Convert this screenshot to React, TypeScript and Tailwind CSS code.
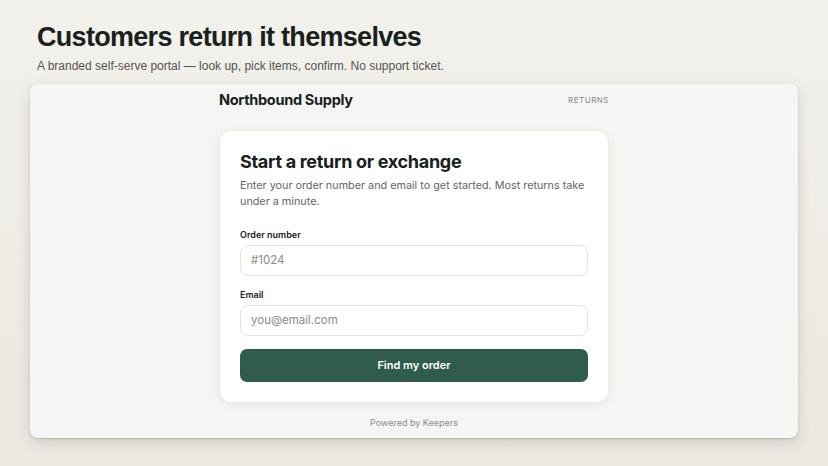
import React from 'react';

export default function App() {
  return (
    <div className="w-[828px] h-[466px] overflow-hidden bg-gradient-to-b from-[#f3f1ec] to-[#ebe8e1] px-[30px] pt-[19px]" style={{ fontFamily: 'Inter, "Noto Sans", sans-serif' }}>
      {/* Page heading */}
      <div className="pl-[7px]">
        <h1 className="text-[27px] leading-[36px] font-bold tracking-[-0.7px] text-[#18211d]" style={{ fontFamily: '"Liberation Sans", Arial, sans-serif' }}>
          Customers return it themselves
        </h1>
        <p className="mt-[2px] text-[12px] leading-[18px] text-[#55554f]" style={{ fontFamily: '"Liberation Sans", Arial, sans-serif' }}>
          A branded self-serve portal — look up, pick items, confirm. No support ticket.
        </p>
      </div>

      {/* Portal frame */}
      <div className="mt-[9px] h-[354px] rounded-[8px] bg-[#f5f5f3] shadow-[0_4px_14px_rgba(80,70,50,0.18),0_1px_2px_rgba(80,70,50,0.2)] flex flex-col items-center">
        <div className="w-[390px] flex items-center justify-between h-[32px]">
          <span className="text-[14.5px] font-bold tracking-[-0.3px] text-[#17211c]">Northbound Supply</span>
          <span className="text-[8px] tracking-[0.5px] text-[#8b8b85]">RETURNS</span>
        </div>

        <div className="mt-[14px] w-[390px] rounded-[12px] bg-white border border-[#eeebe2] shadow-[0_2px_8px_rgba(90,80,50,0.08)] px-[20px] pt-[18px] pb-[20px]">
          <h2 className="text-[18px] leading-[26px] font-bold tracking-[-0.3px] text-[#17211c]">Start a return or exchange</h2>
          <p className="mt-[3px] text-[10.8px] leading-[16px] text-[#65655f]">
            Enter your order number and email to get started. Most returns take under a minute.
          </p>

          <div className="mt-[19px] text-[9px] leading-[12px] font-semibold text-[#17211c]">Order number</div>
          <div className="mt-[4px] h-[31px] rounded-[8px] border border-[#e7e3d6] flex items-center px-[10px] text-[11.5px] text-[#8a8a84]">#1024</div>

          <div className="mt-[13px] text-[9px] leading-[12px] font-semibold text-[#17211c]">Email</div>
          <div className="mt-[4px] h-[31px] rounded-[8px] border border-[#e7e3d6] flex items-center px-[10px] text-[11.5px] text-[#8a8a84]">you@email.com</div>

          <button className="mt-[13px] w-full h-[33px] rounded-[7px] bg-[#2f5c4c] text-white text-[11px] font-semibold">
            Find my order
          </button>
        </div>

        <div className="mt-[13px] text-[9px] text-[#8e8e88]">Powered by Keepers</div>
      </div>
    </div>
  );
}
